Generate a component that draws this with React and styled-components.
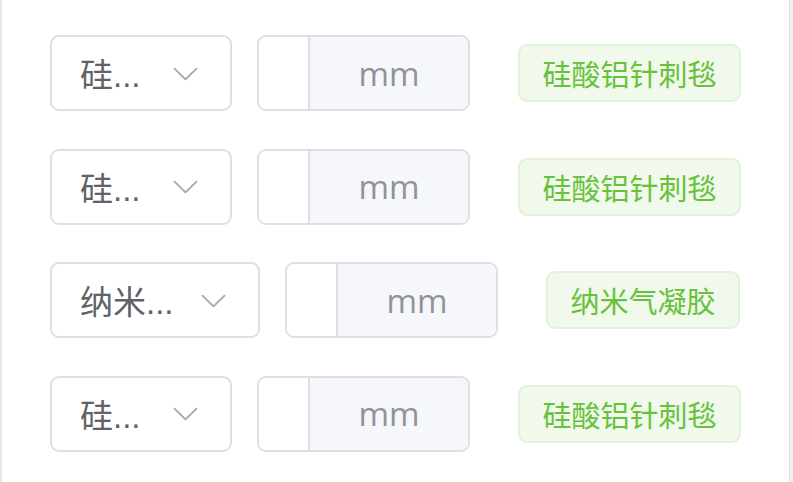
import React from "react";
import styled, { createGlobalStyle } from "styled-components";

// the select shows the clipped label exactly as the reference does
const rows = [
  { label: "硅...", material: "硅酸铝针刺毯", selectWidth: 182 },
  { label: "硅...", material: "硅酸铝针刺毯", selectWidth: 182 },
  { label: "纳米...", material: "纳米气凝胶", selectWidth: 210 },
  { label: "硅...", material: "硅酸铝针刺毯", selectWidth: 182 }
];

const GlobalStyle = createGlobalStyle`
  html, body {
    margin: 0;
    padding: 0;
    background: #eef0f4;
  }
`;

const Panel = styled.div`
  box-sizing: border-box;
  width: 790px;
  height: 482px;
  background: #ffffff;
  border-left: 2px solid #e4e7ed;
  border-right: 1px solid #dcdfe6;
  padding: 35px 0 0 48px;
  display: flex;
  flex-direction: column;
  gap: 37.67px;
  font-family: "Liberation Sans", "Noto Sans CJK SC", sans-serif;
`;

const Row = styled.div`
  display: flex;
  align-items: center;
  height: 76px;
`;

const Select = styled.div`
  box-sizing: border-box;
  width: ${props => props.width}px;
  height: 76px;
  border: 2px solid #dcdfe6;
  border-radius: 9px;
  padding: 0 28px;
  display: flex;
  align-items: center;
  gap: 6px;
  background: #fff;
`;

const SelectText = styled.span`
  flex: 1;
  min-width: 0;
  font-size: 33px;
  color: #606266;
  white-space: nowrap;
`;

const Arrow = styled.svg`
  width: 33px;
  height: 33px;
  flex: none;
  fill: #a8abb2;
`;

const InputGroup = styled.div`
  box-sizing: border-box;
  margin-left: 25px;
  height: 76px;
  display: flex;
  border: 2px solid #dcdfe6;
  border-radius: 9px;
  overflow: hidden;
`;

const Input = styled.div`
  width: 49px;
  background: #fff;
  border-right: 2px solid #dcdfe6;
`;

const Append = styled.div`
  display: flex;
  align-items: center;
  padding: 0 48.5px;
  background: #f5f7fa;
  color: #909399;
  font-family: "Open Sans", "Liberation Sans", sans-serif;
  font-size: 33px;
`;

const Tag = styled.span`
  box-sizing: border-box;
  margin-left: 48px;
  height: 58px;
  padding: 0 22.5px;
  display: inline-flex;
  align-items: center;
  background: #f0f9eb;
  border: 2px solid #e1f3d8;
  border-radius: 9px;
  color: #67c23a;
  font-family: "Noto Sans CJK SC", sans-serif;
  font-size: 29px;
`;

const ArrowDown = () => (
  <Arrow viewBox="0 0 1024 1024">
    <path d="M831.872 340.864 512 652.672 192.128 340.864a30.592 30.592 0 0 0-42.752 0 29.12 29.12 0 0 0 0 41.6L489.664 714.24a32 32 0 0 0 44.672 0l340.288-331.712a29.12 29.12 0 0 0 0-41.728 30.592 30.592 0 0 0-42.752 0z" />
  </Arrow>
);

export default function App() {
  return (
    <>
      <GlobalStyle />
      <Panel>
        {rows.map((row, i) => (
          <Row key={i}>
            <Select width={row.selectWidth}>
              <SelectText>{row.label}</SelectText>
              <ArrowDown />
            </Select>
            <InputGroup>
              <Input />
              <Append>mm</Append>
            </InputGroup>
            <Tag>{row.material}</Tag>
          </Row>
        ))}
      </Panel>
    </>
  );
}
